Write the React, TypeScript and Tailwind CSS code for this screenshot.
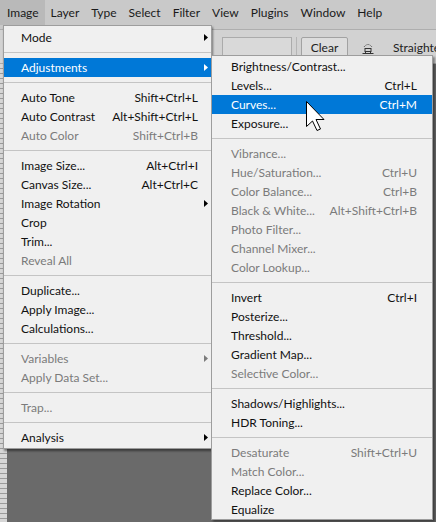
import React from "react";

type Item =
    | { sep: true }
    | { label: string; shortcut?: string; sub?: boolean; disabled?: boolean; active?: boolean; sep?: false };

const S: Item = { sep: true };

const mainItems: Item[] = [
    { label: "Mode", sub: true },
    S,
    { label: "Adjustments", sub: true, active: true },
    S,
    { label: "Auto Tone", shortcut: "Shift+Ctrl+L" },
    { label: "Auto Contrast", shortcut: "Alt+Shift+Ctrl+L" },
    { label: "Auto Color", shortcut: "Shift+Ctrl+B", disabled: true },
    S,
    { label: "Image Size...", shortcut: "Alt+Ctrl+I" },
    { label: "Canvas Size...", shortcut: "Alt+Ctrl+C" },
    { label: "Image Rotation", sub: true },
    { label: "Crop" },
    { label: "Trim..." },
    { label: "Reveal All", disabled: true },
    S,
    { label: "Duplicate..." },
    { label: "Apply Image..." },
    { label: "Calculations..." },
    S,
    { label: "Variables", sub: true, disabled: true },
    { label: "Apply Data Set...", disabled: true },
    S,
    { label: "Trap...", disabled: true },
    S,
    { label: "Analysis", sub: true },
];

const subItems: Item[] = [
    { label: "Brightness/Contrast..." },
    { label: "Levels...", shortcut: "Ctrl+L" },
    { label: "Curves...", shortcut: "Ctrl+M", active: true },
    { label: "Exposure..." },
    S,
    { label: "Vibrance...", disabled: true },
    { label: "Hue/Saturation...", shortcut: "Ctrl+U", disabled: true },
    { label: "Color Balance...", shortcut: "Ctrl+B", disabled: true },
    { label: "Black & White...", shortcut: "Alt+Shift+Ctrl+B", disabled: true },
    { label: "Photo Filter...", disabled: true },
    { label: "Channel Mixer...", disabled: true },
    { label: "Color Lookup...", disabled: true },
    S,
    { label: "Invert", shortcut: "Ctrl+I" },
    { label: "Posterize..." },
    { label: "Threshold..." },
    { label: "Gradient Map..." },
    { label: "Selective Color...", disabled: true },
    S,
    { label: "Shadows/Highlights..." },
    { label: "HDR Toning..." },
    S,
    { label: "Desaturate", shortcut: "Shift+Ctrl+U", disabled: true },
    { label: "Match Color...", disabled: true },
    { label: "Replace Color..." },
    { label: "Equalize" },
];

function Arrow({ color }: { color: string }) {
    return (
        <svg width="4" height="7" viewBox="0 0 4 7">
            <path d="M0 0 L4 3.5 L0 7 Z" fill={color} />
        </svg>
    );
}

function MenuRows({ items, withArrows }: { items: Item[]; withArrows: boolean }) {
    return (
        <>
            {items.map((it, i) => {
                if (it.sep) {
                    return (
                        <div key={i} className="flex h-[11px] items-center">
                            <div className="h-px w-full bg-[#c4c4c4]" />
                        </div>
                    );
                }
                const color = it.active ? "text-white" : it.disabled ? "text-[#7b7b7b]" : "text-[#111]";
                return (
                    <div
                        key={i}
                        className={`flex h-[19px] items-center ${it.active ? "bg-[#0078d7]" : ""} ${
                            withArrows ? "pl-[17px] pr-[3px]" : "pl-[19px] pr-[15px]"
                        } ${color}`}
                    >
                        <span className="flex-1 whitespace-nowrap">{it.label}</span>
                        {it.shortcut && <span className="whitespace-nowrap">{it.shortcut}</span>}
                        {withArrows && (
                            <span className="flex w-[10px] justify-end">
                                {it.sub && <Arrow color={it.active ? "#fff" : it.disabled ? "#7b7b7b" : "#000"} />}
                            </span>
                        )}
                    </div>
                );
            })}
        </>
    );
}

function StraightenIcon() {
    return (
        <svg width="12" height="11" viewBox="0 0 12 11" className="shrink-0 text-[#333]">
            <path d="M2 4 Q6 -1 10 4" fill="none" stroke="currentColor" strokeWidth="1" strokeDasharray="1 1.2" />
            <rect x="3" y="5.5" width="6" height="3" fill="none" stroke="currentColor" strokeWidth="1" />
            <path d="M0.5 10.5 H11.5 M3.5 8.5 V10.5 M8.5 8.5 V10.5" stroke="currentColor" strokeWidth="1" />
        </svg>
    );
}

export default function App() {
    const bar = ["Image", "Layer", "Type", "Select", "Filter", "View", "Plugins", "Window", "Help"];
    return (
        <div className="relative flex h-[522px] w-[436px] flex-col overflow-hidden bg-[#6a6a6a] font-['Lato',sans-serif] text-[12px]">
            <div className="flex h-[30px] shrink-0 items-start border-b border-[#aeaeae] bg-[#c9c9c9] text-[12px] text-[#1a1a1a]">
                {bar.map((b, i) => (
                    <div
                        key={b}
                        className={`flex h-[25px] items-center ${i === 0 ? "bg-[#b9b9b9] pl-[7px] pr-[6px]" : "px-[6px]"}`}
                    >
                        {b}
                    </div>
                ))}
            </div>
            <div className="flex h-[34px] shrink-0 items-start gap-[4px] overflow-hidden border-b border-[#a9a9a9] bg-[#d2d2d2] pl-[222px] pt-[7px] text-[#222]">
                <div className="h-[22px] w-[70px] shrink-0 border border-[#ababab] bg-[#d9d9d9]" />
                <div className="h-[26px] w-px shrink-0 bg-[#b5b5b5]" />
                <div className="flex h-[22px] w-[47px] shrink-0 items-center justify-center rounded-[2px] border border-[#a2a2a2] bg-[#dddddd]">
                    Clear
                </div>
                <div className="ml-[10px] flex h-[22px] shrink-0 items-center gap-[19px]">
                    <StraightenIcon />
                    <span className="whitespace-nowrap">Straighten</span>
                </div>
            </div>
            <div className="flex flex-1">
                <div className="w-[7px] bg-[repeating-linear-gradient(to_bottom,#d6d6d6_0px,#d6d6d6_4px,#9a9a9a_4px,#9a9a9a_5px)]" />
                <div className="flex-1 bg-[#6a6a6a]" />
            </div>

            <div className="absolute left-[3px] top-[25px] w-[209px] border border-[#9d9d9d] bg-[#f0f0f0] pb-[1px] pt-[2px] shadow-[1px_2px_2px_rgba(0,0,0,0.45)]">
                <MenuRows items={mainItems} withArrows />
            </div>

            <div className="absolute left-[211px] top-[55px] w-[222px] border border-[#9d9d9d] bg-[#f0f0f0] pt-[1px] shadow-[2px_2px_2px_rgba(0,0,0,0.4)]">
                <MenuRows items={subItems} withArrows={false} />
            </div>

            <svg className="absolute left-[306px] top-[101px]" width="20" height="31" viewBox="-0.5 -0.5 20 31">
                <path
                    d="M0 0 L0 25 L6 19.5 L10.5 29 L14 27.5 L9.5 18 L17.5 18 Z"
                    fill="#fff"
                    stroke="#000"
                    strokeWidth="1"
                    strokeLinejoin="miter"
                />
            </svg>
        </div>
    );
}
